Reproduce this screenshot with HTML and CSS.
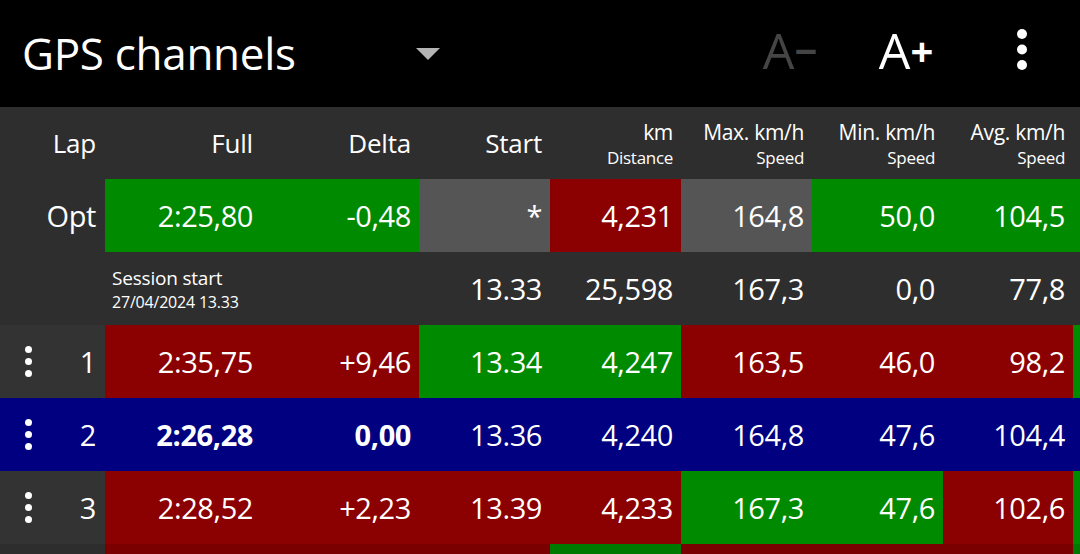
FILE: index.html
```html
<!DOCTYPE html>
<html>
<head>
<meta charset="utf-8">
<link rel="stylesheet" href="styles.css">
</head>
<body>
<header class="appbar">
  <div class="spinner">
    <span class="title">GPS channels</span>
    <svg class="caret" width="24" height="12" viewBox="0 0 24 12"><path d="M0 0 H24 L12 12 Z" fill="#b4b4b4"/></svg>
  </div>
  <div class="actions">
    <div class="act dim">A<span class="sign">−</span></div>
    <div class="act">A<span class="sign">+</span></div>
    <div class="act"><svg width="12" height="44" viewBox="0 0 12 44"><circle cx="6" cy="6" r="5" fill="#fff"/><circle cx="6" cy="21.5" r="5" fill="#fff"/><circle cx="6" cy="37" r="5" fill="#fff"/></svg></div>
  </div>
</header>
<main class="table">
  <div class="row head">
    <div class="c">Lap</div>
    <div class="c">Full</div>
    <div class="c">Delta</div>
    <div class="c">Start</div>
    <div class="c two"><span class="u">km</span><span class="l">Distance</span></div>
    <div class="c two"><span class="u">Max. km/h</span><span class="l">Speed</span></div>
    <div class="c two"><span class="u">Min. km/h</span><span class="l">Speed</span></div>
    <div class="c two"><span class="u">Avg. km/h</span><span class="l">Speed</span></div>
    <div class="c"></div>
  </div>
  <div class="row">
    <div class="c">Opt</div>
    <div class="c g">2:25,80</div>
    <div class="c g">-0,48</div>
    <div class="c k star">*</div>
    <div class="c r">4,231</div>
    <div class="c k">164,8</div>
    <div class="c g">50,0</div>
    <div class="c g">104,5</div>
    <div class="c g"></div>
  </div>
  <div class="row">
    <div class="c"></div>
    <div class="c session"><span class="s1">Session start</span><span class="s2">27/04/2024 13.33</span></div>
    <div class="c">13.33</div>
    <div class="c">25,598</div>
    <div class="c">167,3</div>
    <div class="c">0,0</div>
    <div class="c">77,8</div>
    <div class="c"></div>
  </div>
  <div class="row lap">
    <div class="c lapc"><span class="dots"><i></i><i></i><i></i></span>1</div>
    <div class="c r">2:35,75</div>
    <div class="c r">+9,46</div>
    <div class="c g">13.34</div>
    <div class="c g">4,247</div>
    <div class="c r">163,5</div>
    <div class="c r">46,0</div>
    <div class="c r">98,2</div>
    <div class="c g"></div>
  </div>
  <div class="row lap best">
    <div class="c lapc"><span class="dots"><i></i><i></i><i></i></span>2</div>
    <div class="c b">2:26,28</div>
    <div class="c b">0,00</div>
    <div class="c">13.36</div>
    <div class="c">4,240</div>
    <div class="c">164,8</div>
    <div class="c">47,6</div>
    <div class="c">104,4</div>
    <div class="c"></div>
  </div>
  <div class="row lap">
    <div class="c lapc"><span class="dots"><i></i><i></i><i></i></span>3</div>
    <div class="c r">2:28,52</div>
    <div class="c r">+2,23</div>
    <div class="c r">13.39</div>
    <div class="c r">4,233</div>
    <div class="c g">167,3</div>
    <div class="c g">47,6</div>
    <div class="c r">102,6</div>
    <div class="c g"></div>
  </div>
  <div class="row lap fade">
    <div class="c lapc"></div>
    <div class="c r"></div>
    <div class="c r"></div>
    <div class="c r"></div>
    <div class="c g"></div>
    <div class="c r"></div>
    <div class="c r"></div>
    <div class="c r"></div>
    <div class="c g"></div>
  </div>
</main>
</body>
</html>
```
FILE: styles.css
```css
html, body {
  margin: 0;
  padding: 0;
}
body {
  width: 1080px;
  height: 554px;
  overflow: hidden;
  background: #2e2e2e;
  font-family: "Open Sans", "DejaVu Sans", sans-serif;
  color: #fff;
}
.appbar {
  height: 107px;
  background: #000;
  display: flex;
  align-items: center;
}
.spinner {
  width: 418px;
  padding-left: 22px;
  display: flex;
  align-items: center;
  justify-content: space-between;
}
.title {
  font-size: 44px;
  line-height: 1;
  letter-spacing: -0.3px;
  margin-top: -2px;
}
.caret {
  margin-top: 1px;
}
.actions {
  margin-left: auto;
  display: flex;
  align-items: center;
  margin-top: -7px;
}
.act {
  width: 116px;
  height: 56px;
  display: flex;
  align-items: center;
  justify-content: center;
  font-size: 50px;
  line-height: 1;
  color: #fff;
}
.act.dim {
  color: #454545;
}
.sign {
  font-size: 40px;
  font-weight: 700;
  line-height: 1;
  margin-left: 0;
  margin-top: 2px;
}
.table {
  display: flex;
  flex-direction: column;
}
.row {
  display: grid;
  grid-template-columns: 105px 156px 158px 131px 131px 131px 131px 130px 120px;
  height: 73px;
  background: #2e2e2e;
}
.row.head {
  height: 72px;
}
.c {
  display: flex;
  align-items: center;
  justify-content: flex-end;
  padding-right: 8px;
  font-size: 29px;
  letter-spacing: -0.4px;
  white-space: nowrap;
  overflow: hidden;
}
.head .c {
  font-size: 26px;
  letter-spacing: -0.2px;
}
.head .c.two {
  flex-direction: column;
  align-items: flex-end;
  justify-content: center;
  letter-spacing: -0.3px;
}
.head .u {
  font-size: 21px;
  line-height: normal;
}
.head .l {
  font-size: 17px;
  line-height: normal;
}
.c:first-child {
  padding-right: 9px;
}
.g { background: #008a00; }
.r { background: #8b0000; }
.k { background: #555555; }
.star {
  align-items: flex-start;
  padding-top: 17px;
  box-sizing: border-box;
}
.session {
  grid-column: span 2;
  flex-direction: column;
  align-items: flex-start;
  justify-content: center;
  padding-left: 7px;
  letter-spacing: -0.2px;
}
.s1 {
  font-size: 19px;
  line-height: normal;
}
.s2 {
  font-size: 16px;
  line-height: normal;
}
.lap .lapc {
  background: #333333;
  justify-content: space-between;
  padding-left: 25px;
}
.dots {
  display: flex;
  flex-direction: column;
  gap: 5px;
}
.dots i {
  display: block;
  width: 7px;
  height: 7px;
  border-radius: 50%;
  background: #fff;
}
.row.best,
.row.best .c {
  background: #000080;
}
.b {
  font-weight: 700;
}
.row.fade {
  filter: brightness(0.88);
}
```
